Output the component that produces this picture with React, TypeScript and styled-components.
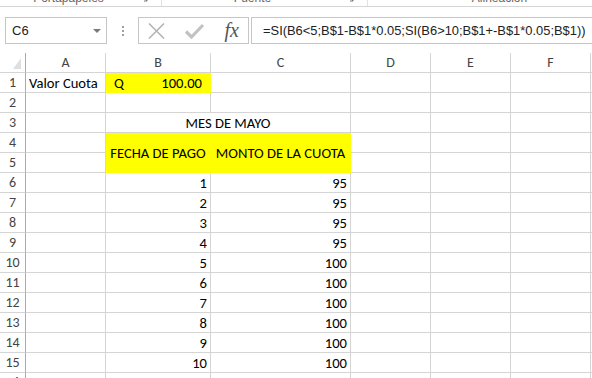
import styled, { createGlobalStyle } from 'styled-components'

const GlobalStyle = createGlobalStyle`
  html, body {
    margin: 0;
    padding: 0;
    background: #ffffff;
    overflow: hidden;
  }
  * {
    box-sizing: border-box;
  }
`

const Window = styled.div`
  width: 592px;
  height: 378px;
  overflow: hidden;
  display: flex;
  flex-direction: column;
  background: #ffffff;
  font-family: 'Liberation Sans', Arial, sans-serif;
`

// ---- ribbon strip (only the bottom of the group labels is visible)
const Ribbon = styled.div`
  height: 7px;
  flex: none;
  display: flex;
  align-items: flex-end;
  overflow: hidden;
  border-bottom: 1px solid #d5d5d5;
  background: #ffffff;
`

const Group = styled.div<{ $width: number }>`
  width: ${(p) => p.$width}px;
  flex: none;
  height: 100%;
  display: flex;
  align-items: flex-end;
  border-right: 1px solid #e1e1e1;
`

const GroupLabel = styled.div`
  flex: 1;
  text-align: center;
  font-size: 12px;
  line-height: 12px;
  color: #666666;
  margin-bottom: 2px;
  white-space: nowrap;
`

const Launcher = styled.svg`
  flex: none;
  width: 8px;
  height: 8px;
  margin: 0 12px 3px 4px;
`

// ---- formula bar
const FormulaBar = styled.div`
  flex: none;
  display: flex;
  align-items: stretch;
  height: 27px;
  margin: 10px 0 9px 0;
  padding-left: 5px;
`

const NameBox = styled.div`
  width: 102px;
  flex: none;
  border: 1px solid #c6c6c6;
  display: flex;
  align-items: center;
  justify-content: space-between;
  padding: 0 5px 0 6px;
  font-size: 13px;
  color: #222222;
`

const DropArrow = styled.span`
  width: 0;
  height: 0;
  border-left: 4px solid transparent;
  border-right: 4px solid transparent;
  border-top: 4px solid #7a7a7a;
`

const Grip = styled.div`
  width: 31px;
  flex: none;
  display: flex;
  flex-direction: column;
  align-items: center;
  justify-content: center;
  gap: 2px;
`

const GripDot = styled.span`
  width: 2px;
  height: 2px;
  background: #a0a0a0;
`

const ActionBox = styled.div`
  width: 111px;
  flex: none;
  border: 1px solid #c6c6c6;
  display: flex;
  align-items: center;
  padding: 0 8px 0 8px;
`

const ActionIcon = styled.svg`
  width: 36px;
  height: 18px;
  flex: none;
`

const Fx = styled.span`
  margin-left: auto;
  font-family: 'Liberation Serif', 'Times New Roman', serif;
  font-style: italic;
  font-size: 20px;
  color: #555555;
  padding-right: 1px;
`

const FormulaInput = styled.div`
  flex: 1;
  margin-left: 2px;
  margin-right: -10px;
  border: 1px solid #c6c6c6;
  display: flex;
  align-items: center;
  padding-left: 11px;
  font-size: 12.9px;
  color: #222222;
  white-space: nowrap;
`

// ---- sheet grid
const Sheet = styled.div`
  flex: 1;
  overflow: hidden;
  display: grid;
  grid-template-columns: 26px 80px 105px 140px 80px 80px 80px 80px;
  grid-auto-rows: 20px;
  font-family: Calibri, Carlito, Lato, 'Liberation Sans', sans-serif;
  font-size: 14.6px;
  color: #000000;
`

const Corner = styled.div`
  grid-row: 1;
  grid-column: 1;
  border-right: 1px solid #ababab;
  border-bottom: 1px solid #d5d5d5;
  display: flex;
  align-items: flex-end;
  justify-content: flex-end;
  padding: 0 4px 3px 0;
`

const CornerMark = styled.span`
  width: 0;
  height: 0;
  border-left: 8px solid transparent;
  border-bottom: 11px solid #dfdfdf;
`

const ColHead = styled.div<{ $c: number }>`
  grid-row: 1;
  grid-column: ${(p) => p.$c};
  border-right: 1px solid #d5d5d5;
  border-bottom: 1px solid #d5d5d5;
  display: flex;
  align-items: center;
  justify-content: center;
  color: #444444;
  font-size: 14px;
`

const RowHead = styled.div<{ $r: number }>`
  grid-row: ${(p) => p.$r};
  grid-column: 1;
  border-right: 1px solid #ababab;
  border-bottom: 1px solid #d5d5d5;
  display: flex;
  align-items: center;
  justify-content: center;
  color: #444444;
  font-size: 14px;
`

const Cell = styled.div<{
  $r: number
  $c: number
  $rows?: number
  $cols?: number
  $fill?: string
  $align?: 'left' | 'right' | 'center'
}>`
  grid-row: ${(p) => p.$r} / span ${(p) => p.$rows ?? 1};
  grid-column: ${(p) => p.$c} / span ${(p) => p.$cols ?? 1};
  background: ${(p) => p.$fill ?? '#ffffff'};
  border-right: 1px solid ${(p) => p.$fill ?? '#d5d5d5'};
  border-bottom: 1px solid ${(p) => p.$fill ?? '#d5d5d5'};
  display: flex;
  align-items: center;
  justify-content: ${(p) =>
    p.$align === 'right' ? 'flex-end' : p.$align === 'center' ? 'center' : 'flex-start'};
  padding: 1px 3px 0 3px;
  white-space: nowrap;
`

const Money = styled.span`
  flex: 1;
  display: flex;
  justify-content: space-between;
  padding: 0 5px 0 5px;
`

const YELLOW = '#ffff00'
const colLetters = ['A', 'B', 'C', 'D', 'E', 'F', 'G']
const montos = [95, 95, 95, 95, 100, 100, 100, 100, 100, 100]

// sheet row n lives in grid row n + 1, column A is grid column 2
type Content = {
  text?: React.ReactNode
  fill?: string
  align?: 'left' | 'right' | 'center'
  rows?: number
  cols?: number
}

function buildCells() {
  const special: Record<string, Content> = {
    '1-2': { text: 'Valor Cuota' },
    '1-3': {
      text: (
        <Money>
          <span>Q</span>
          <span>100.00</span>
        </Money>
      ),
      fill: YELLOW,
    },
    '3-3': { text: 'MES DE MAYO', align: 'center', cols: 2 },
    '4-3': { text: 'FECHA DE PAGO', align: 'center', rows: 2, fill: YELLOW },
    '4-4': { text: 'MONTO DE LA CUOTA', align: 'center', rows: 2, fill: YELLOW },
  }
  montos.forEach((m, i) => {
    special[`${i + 6}-3`] = { text: String(i + 1), align: 'right' }
    special[`${i + 6}-4`] = { text: String(m), align: 'right' }
  })
  const covered = new Set(['3-4', '5-3', '5-4'])
  const out: JSX.Element[] = []
  for (let r = 1; r <= 16; r++) {
    for (let c = 2; c <= 8; c++) {
      const key = `${r}-${c}`
      if (covered.has(key)) continue
      const s = special[key] ?? {}
      out.push(
        <Cell key={key} $r={r + 1} $c={c} $rows={s.rows} $cols={s.cols} $fill={s.fill} $align={s.align}>
          {s.text}
        </Cell>
      )
    }
  }
  return out
}

const App = () => {
  return (
    <Window>
      <GlobalStyle />
      <Ribbon>
        <Group $width={162}>
          <GroupLabel>Portapapeles</GroupLabel>
          <Launcher viewBox="0 0 8 8">
            <path d="M1 1 L6 6 M3 6 H6 V3" stroke="#777" strokeWidth="1" fill="none" />
          </Launcher>
        </Group>
        <Group $width={206}>
          <GroupLabel>Fuente</GroupLabel>
          <Launcher viewBox="0 0 8 8">
            <path d="M1 1 L6 6 M3 6 H6 V3" stroke="#777" strokeWidth="1" fill="none" />
          </Launcher>
        </Group>
        <Group $width={264}>
          <GroupLabel>Alineación</GroupLabel>
        </Group>
      </Ribbon>

      <FormulaBar>
        <NameBox>
          <span>C6</span>
          <DropArrow />
        </NameBox>
        <Grip>
          <GripDot />
          <GripDot />
          <GripDot />
        </Grip>
        <ActionBox>
          <ActionIcon viewBox="0 0 36 18">
            <path d="M2 1.5 L17 16.5 M17 1.5 L2 16.5" stroke="#b3b3b3" strokeWidth="1.6" fill="none" />
          </ActionIcon>
          <ActionIcon viewBox="0 0 36 18">
            <path d="M3 9.5 L8.5 15 L20 3" stroke="#c2c2c2" strokeWidth="3.2" fill="none" />
          </ActionIcon>
          <Fx>fx</Fx>
        </ActionBox>
        <FormulaInput>=SI(B6&lt;5;B$1-B$1*0.05;SI(B6&gt;10;B$1+-B$1*0.05;B$1))</FormulaInput>
      </FormulaBar>

      <Sheet>
        <Corner>
          <CornerMark />
        </Corner>
        {colLetters.map((l, i) => (
          <ColHead key={l} $c={i + 2}>
            {l}
          </ColHead>
        ))}
        {Array.from({ length: 16 }, (_, i) => (
          <RowHead key={i} $r={i + 2}>
            {i + 1}
          </RowHead>
        ))}
        {buildCells()}
      </Sheet>
    </Window>
  )
}

export default App
